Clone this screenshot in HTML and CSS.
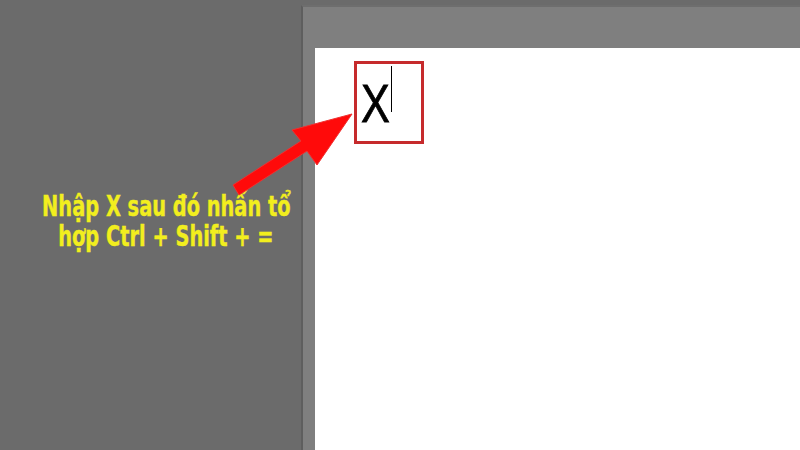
FILE: index.html
```html
<!DOCTYPE html>
<html lang="vi">
<head>
<meta charset="utf-8">
<link rel="stylesheet" href="styles.css">
</head>
<body>
<div class="screen">
  <div class="side">
    <p class="note"><span class="l1">Nhập X sau đó nhấn tổ</span><span class="l2">hợp Ctrl + Shift + =</span></p>
  </div>
  <div class="panel">
    <div class="page">
      <div class="box"><span class="letter">X</span><span class="cursor"></span></div>
    </div>
  </div>
</div>
<svg class="arrow" width="800" height="450" viewBox="0 0 800 450">
  <polygon points="233,185 301,141 292,130 352,114 317,165 307,151 239,195" fill="#ff0a0a" stroke="#f03030" stroke-width="1" stroke-linejoin="miter"/>
</svg>
</body>
</html>
```
FILE: styles.css
```css
html, body {
  margin: 0;
  padding: 0;
}
body {
  width: 800px;
  height: 450px;
  overflow: hidden;
  background: #6b6b6b;
  position: relative;
}
.screen {
  display: flex;
  height: 450px;
}
.side {
  width: 301px;
  flex: none;
  box-sizing: border-box;
  padding-top: 192px;
  padding-left: 36px;
}
.note {
  margin: 0;
  width: 260px;
  display: flex;
  flex-direction: column;
  align-items: center;
  font-family: "DejaVu Sans Condensed", "Liberation Sans", sans-serif;
  font-weight: bold;
  font-size: 28px;
  line-height: 30px;
  color: #f2ee1e;
  -webkit-text-stroke: 0.4px #f2ee1e;
}
.note span {
  display: inline-block;
  white-space: nowrap;
  transform: scaleX(0.77);
  transform-origin: center;
}
.panel {
  flex: 1;
  margin-top: 5px;
  background: #7f7f7f;
  border-left: 2px solid #5e5e5e;
  border-top: 2px solid #6e6e6e;
  padding: 41px 0 0 12px;
  display: flex;
}
.page {
  flex: 1;
  background: #ffffff;
  padding: 13px 0 0 39px;
}
.box {
  width: 58px;
  height: 77px;
  border: 3px solid #c62a2c;
  display: flex;
  align-items: flex-start;
  padding-left: 6px;
  box-sizing: content-box;
}
.letter {
  display: inline-block;
  font-family: "Liberation Sans", Arial, sans-serif;
  font-size: 54px;
  line-height: 54px;
  color: #000;
  -webkit-text-stroke: 0.8px #000;
  margin-top: 12px;
  margin-left: -2px;
  transform: scaleX(0.8);
  transform-origin: left center;
  width: 30px;
}
.cursor {
  width: 1px;
  height: 46px;
  background: #000;
  margin-top: 2px;
  margin-left: 0;
}
.arrow {
  position: absolute;
  left: 0;
  top: 0;
  pointer-events: none;
}
```
